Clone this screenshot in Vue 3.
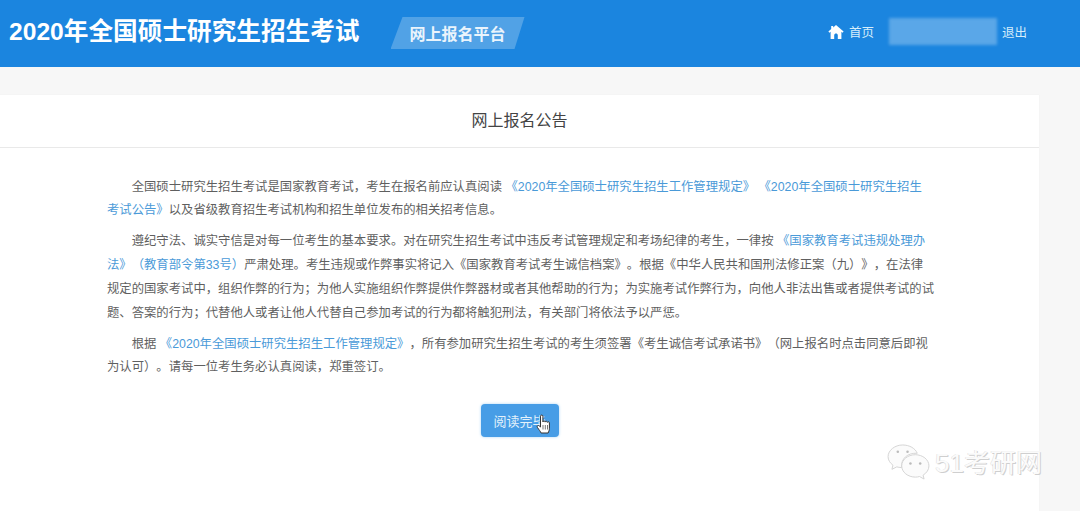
<script setup>
</script>

<template>
  <div class="page">
    <header class="top">
      <h1 class="title">2020年全国硕士研究生招生考试</h1>
      <div class="tag"><span>网上报名平台</span></div>
      <nav class="nav">
        <svg class="home" viewBox="0 0 16 16" width="16" height="16">
          <path fill="#fff" d="M8 1 5.200 3.400V2h-2v3.100L.4 7.600l1 1.100L2.600 7.700V15h3.600v-3.700c0-2.400 3.600-2.400 3.600 0V15h3.600V7.700l1.200 1 1-1.100z" />
        </svg>
        <a class="link">首页</a>
        <div class="mask"></div>
        <a class="link">退出</a>
      </nav>
    </header>
    <main class="main">
      <section class="card">
        <h2 class="head">网上报名公告</h2>
        <div class="body">
          <p>全国硕士研究生招生考试是国家教育考试，考生在报名前应认真阅读 <a>《2020年全国硕士研究生招生工作管理规定》</a> <a>《2020年全国硕士研究生招生<br />考试公告》</a>以及省级教育招生考试机构和招生单位发布的相关招考信息。</p>
          <p>遵纪守法、诚实守信是对每一位考生的基本要求。对在研究生招生考试中违反考试管理规定和考场纪律的考生，一律按 <a>《国家教育考试违规处理办<br />法》（教育部令第33号）</a>严肃处理。考生违规或作弊事实将记入《国家教育考试考生诚信档案》。根据《中华人民共和国刑法修正案（九）》，在法律<br />规定的国家考试中，组织作弊的行为；为他人实施组织作弊提供作弊器材或者其他帮助的行为；为实施考试作弊行为，向他人非法出售或者提供考试的试<br />题、答案的行为；代替他人或者让他人代替自己参加考试的行为都将触犯刑法，有关部门将依法予以严惩。</p>
          <p>根据 <a>《2020年全国硕士研究生招生工作管理规定》</a>，所有参加研究生招生考试的考生须签署《考生诚信考试承诺书》（网上报名时点击同意后即视<br />为认可）。请每一位考生务必认真阅读，郑重签订。</p>
        </div>
        <div class="actions">
          <button class="btn">阅读完毕</button>
          <svg class="hand" viewBox="0 0 16 22" width="17" height="22">
            <path fill="#fff" stroke="#333" stroke-width="1" stroke-linejoin="round" d="M5 2.200c0-1.500 2.400-1.500 2.400 0V8c.2-1.400 2.300-1.300 2.300.1.200-1.200 2.200-1.100 2.200.3.400-1 2-.8 2 .5v5.400c0 2.200-.7 3.200-1.300 4.700H5.600c-.6-1.600-2-3-3.700-5.600-.9-1.500.9-2.700 2-1.300L5 13z" />
            <path stroke="#555" stroke-width=".8" d="M7.500 11v4.500M9.800 11v4.500M12 11v4.500" />
          </svg>
        </div>
      </section>
      <div class="mark">
        <svg viewBox="0 0 44 38" width="43" height="37" fill="#fbfbfb" stroke="#d4d4d4" stroke-width="1">
          <path d="M16 1C8 1 1 6.500 1 13c0 3.500 2 6.500 5 8.700L5 26l5-2.500c1.500.4 3 .6 5 .7C14 15 21 9 31 9.500 29 4.500 23 1 16 1z" />
          <path d="M29 11c-7.500 0-14 5-14 11.500S21.500 34 29 34c1.500 0 3-.2 4.300-.6L38 36l-1-4c3.500-2.200 6-5.500 6-9.500C43 16 36.500 11 29 11z" />
          <circle cx="11" cy="8" r="1.300" fill="#bbb" stroke="none" />
          <circle cx="21" cy="8" r="1.300" fill="#bbb" stroke="none" />
          <circle cx="24" cy="20" r="1.300" fill="#bbb" stroke="none" />
          <circle cx="34" cy="20" r="1.300" fill="#bbb" stroke="none" />
        </svg>
        <span class="mark-text">51考研网</span>
      </div>
    </main>
  </div>
</template>

<style>
html, body { margin: 0; overflow: hidden; background: #f7f7f7; }
</style>

<style scoped>
.page {
  height: 511px;
  overflow: hidden;
  display: flex;
  flex-direction: column;
  font-family: "Liberation Sans", "Noto Sans CJK SC", sans-serif;
  background: #f7f7f7;
}
.top {
  height: 67px;
  flex: none;
  box-sizing: border-box;
  padding-left: 9px;
  display: flex;
  align-items: center;
  background: #1b85df;
  color: #fff;
}
.title {
  margin: 0 0 3px;
  font-size: 24.650px;
  font-weight: 700;
  white-space: nowrap;
  line-height: 32px;
}
.tag {
  position: relative;
  margin: 0 0 1px 31px;
  width: 134px;
  height: 32px;
  display: flex;
  align-items: center;
  justify-content: center;
  background: rgba(255, 255, 255, 0.24);
  clip-path: polygon(12px 0, 100% 0, calc(100% - 10px) 100%, 0 100%);
  font-size: 16px;
  font-weight: 700;
  color: #eaf4fc;
}
.nav {
  display: flex;
  align-items: center;
  margin-left: auto;
  margin-right: 53px;
  margin-top: -5px;
  font-size: 12.500px;
  color: #d5edfb;
}
.home { margin-right: 5px; margin-top: 2px; }
.link { white-space: nowrap; }
.mask {
  width: 108px;
  height: 27px;
  margin: 1px 5px 0 15px;
  background: rgba(255, 255, 255, 0.28);
  filter: blur(1.500px);
}
.main {
  position: relative;
  flex: 1;
  padding: 28px 41px 0 0;
}
.card {
  height: 100%;
  background: #fff;
  box-shadow: 0 0 1px #eee;
}
.head {
  margin: 0;
  height: 53px;
  box-sizing: border-box;
  line-height: 52px;
  text-align: center;
  font-size: 16px;
  font-weight: 400;
  color: #444;
  border-bottom: 1px solid #e9e9e9;
}
.body {
  padding: 27.500px 0 0 107px;
  font-size: 12.350px;
  line-height: 23.700px;
  color: #5f5f5f;
  white-space: nowrap;
  text-spacing-trim: space-all;
}
.body p {
  margin: 0 0 7.500px;
  text-indent: 2em;
}
.body a { color: #4a9ad8; }
.actions {
  position: relative;
  display: flex;
  justify-content: center;
  margin-top: 23.500px;
}
.btn {
  width: 78px;
  height: 33px;
  padding: 0;
  border: 0;
  border-radius: 4px;
  background: #479de6;
  box-shadow: 0 0 3px #a9d4f5;
  color: #e3f1fb;
  font: inherit;
  font-size: 13px;
}
.hand {
  position: absolute;
  left: 535px;
  top: 10px;
}
.mark {
  position: absolute;
  left: 887px;
  top: 377px;
  display: flex;
  align-items: center;
  gap: 5px;
}
.mark-text {
  font-size: 26px;
  line-height: 30px;
  color: #fbfbfb;
  text-shadow: 1px 1px 0 #cfcfcf, -0.5px -0.5px 0 #dcdcdc;
  white-space: nowrap;
}
</style>
